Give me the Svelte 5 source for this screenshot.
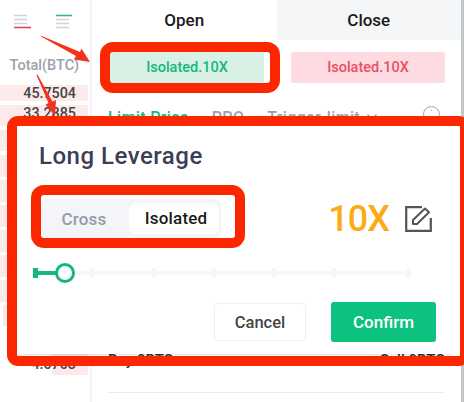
<script>
  const top = [
    { v: '45.7504', h: 16, m: 4 },
    { v: '33.2885', h: 21, m: 4 },
  ];
  const bars = [
    { h: 21, m: 4, l: 0 },
    { h: 22, m: 3, l: 0 },
    { h: 22, m: 3, l: 0 },
    { h: 22, m: 3, l: 0 },
    { h: 22, m: 3, l: 0 },
    { h: 22, m: 3, l: 0 },
    { h: 22, m: 3, l: 0 },
    { h: 21, m: 0, l: 3 },
  ];
  const ticks = [90, 151, 211, 271, 332, 406];
</script>

<div class="page">
  <aside class="book">
    <div class="icons">
      <svg width="18" height="16" viewBox="0 0 18 16">
        <path d="M0 1.5h13M0 5.5h13M0 9.5h13" stroke="#d0d4d9" stroke-width="1.4" fill="none" />
        <path d="M0 13.5h17" stroke="#d9485f" stroke-width="1.6" fill="none" />
      </svg>
      <svg width="18" height="16" viewBox="0 0 18 16">
        <path d="M0 1.5h16" stroke="#2ab98a" stroke-width="1.6" fill="none" />
        <path d="M0 5.5h13M0 9.5h13M0 13.5h13" stroke="#d0d4d9" stroke-width="1.4" fill="none" />
      </svg>
    </div>
    <div class="total">Total(BTC)</div>
    {#each top as r}
      <div class="row" style="height:{r.h}px;margin-bottom:{r.m}px">{r.v}</div>
    {/each}
    {#each bars as b}
      <div class="row" style="height:{b.h}px;margin-bottom:{b.m}px;margin-left:{b.l}px;width:{88 - b.l}px"></div>
    {/each}
    <div class="row last"><span>4.0703</span></div>
  </aside>

  <main class="trade">
    <div class="tabs">
      <div class="tab">Open</div>
      <div class="tab off">Close</div>
    </div>
    <div class="modes">
      <div class="mode long">Isolated.10X</div>
      <div class="mode short">Isolated.10X</div>
    </div>
    <div class="types">
      <span class="active">Limit Price</span>
      <span>PPO</span>
      <span class="trigger">
        Trigger-limit
        <svg width="10" height="6" viewBox="0 0 10 6" fill="none">
          <path d="M0.5 0.5L5 5L9.5 0.5" stroke="#9aa3ad" stroke-width="1.4" />
        </svg>
      </span>
      <i class="info"><b></b></i>
    </div>
    <div class="funds">
      <span>Buy 0BTC</span>
      <span>Sell 0BTC</span>
    </div>
    <div class="rule"></div>
  </main>
  <div class="edge"></div>

  <section class="modal">
    <h2>Long Leverage</h2>
    <div class="line">
      <div class="switch">
        <span class="cross">Cross</span>
        <span class="iso">Isolated</span>
      </div>
      <div class="lev">
        <span class="num">10X</span>
        <svg width="27" height="26" viewBox="0 0 27 26" fill="none">
          <path d="M17 1.2H1.2v23.6h24.6V12" stroke="#555" stroke-width="2.2" />
          <path d="M8 18v-4L20 2.5l4 3.8L12 18z" stroke="#555" stroke-width="2" stroke-linejoin="round" />
        </svg>
      </div>
    </div>
    <div class="slider">
      <div class="track"></div>
      {#each ticks as t}<i class="tick" style="left:{t - 39}px"></i>{/each}
      <div class="start"></div>
      <div class="done"></div>
      <div class="knob"></div>
    </div>
    <div class="actions">
      <button class="cancel">Cancel</button>
      <button class="confirm">Confirm</button>
    </div>
  </section>

  <div class="mark mark-modal"></div>
  <div class="mark mark-mode"></div>
  <div class="mark mark-switch"></div>

  <svg class="arrows" width="464" height="402" viewBox="0 0 464 402">
    <path d="M40.5 35.5 L80 52 L81.5 48.5 L90 62 L74 59.5 L76 56 L41 36.5 z" fill="#f5321e" />
    <path d="M36.5 75 L48.5 103 L45.5 104.5 L55 116 L56 100 L52.5 101.5 L37.5 74.5 z" fill="#f5321e" />
  </svg>
</div>

<style>
  :global(body) {
    margin: 0;
    background: #fff;
  }
  .page {
    position: relative;
    width: 464px;
    height: 402px;
    overflow: hidden;
    display: flex;
    font-family: Roboto, "Liberation Sans", sans-serif;
    font-weight: 500;
    color: #222;
  }
  .book {
    width: 92px;
    box-sizing: border-box;
    border-right: 2px solid #f3f4f6;
    flex: none;
  }
  .icons {
    display: flex;
    gap: 24px;
    padding: 14px 0 0 14px;
    height: 43px;
  }
  .total {
    text-align: right;
    padding-right: 11px;
    font-size: 14.5px;
    color: #9aa3ad;
    line-height: 18px;
    margin-bottom: 10px;
  }
  .row {
    width: 88px;
    box-sizing: border-box;
    text-align: right;
    padding-right: 12px;
    font-size: 14.3px;
    line-height: 16px;
    color: #444;
    background: #fce9ea;
  }
  .row.last {
    height: 21px;
    margin-top: 28px;
    background: linear-gradient(to right, transparent 52px, #fce9ea 52px);
    line-height: 21px;
  }
  .trade {
    width: 369px;
    flex: none;
  }
  .tabs {
    display: flex;
    height: 40px;
  }
  .tab {
    flex: 1;
    text-align: center;
    line-height: 41px;
    font-size: 17px;
    color: #1a1a1a;
  }
  .tab.off {
    background: #f5f6f8;
  }
  .modes {
    display: flex;
    gap: 27px;
    padding: 12px 16px 0 18px;
  }
  .mode {
    flex: 1;
    height: 31px;
    line-height: 31px;
    text-align: center;
    font-size: 14.5px;
    border-radius: 2px;
  }
  .long {
    background: #d9f1e5;
    color: #14b87c;
  }
  .short {
    background: #fddbe0;
    color: #ea4f66;
  }
  .types {
    display: flex;
    gap: 23px;
    height: 20px;
    padding: 25px 21px 0 16px;
    font-size: 16px;
    letter-spacing: 0.35px;
    line-height: 20px;
    color: #9aa3ad;
  }
  .active {
    color: #14b87c;
  }
  .trigger {
    display: flex;
    align-items: flex-start;
    gap: 7px;
  }
  .trigger svg {
    margin-top: 6px;
  }
  .info {
    position: relative;
    width: 15px;
    height: 15px;
    margin: -2px 0 0 auto;
    border: 1px solid #9aa3ad;
    border-radius: 50%;
  }
  .info b {
    position: absolute;
    left: 7px;
    top: 3px;
    width: 1px;
    height: 1px;
    background: #9aa3ad;
  }
  .funds {
    display: flex;
    justify-content: space-between;
    height: 41px;
    margin-top: 223px;
    padding: 0 16px;
    font-size: 15px;
    line-height: 19px;
    color: #333;
  }
  .rule {
    height: 1px;
    margin: 0 16px;
    background: #ececec;
  }
  .edge {
    flex: 1;
    background: #bfc7c9;
  }
  .modal {
    position: absolute;
    left: 16px;
    top: 126px;
    width: 436px;
    height: 228px;
    box-sizing: border-box;
    background: #fff;
    border-radius: 3px;
    box-shadow: 0 1px 2px rgba(0, 0, 0, 0.12);
    padding: 15px 20px 0 23px;
  }
  h2 {
    margin: 0;
    font-size: 24px;
    letter-spacing: 0.5px;
    font-weight: 500;
    color: #3b3e57;
    line-height: 30px;
  }
  .line {
    display: flex;
    justify-content: space-between;
    align-items: center;
    margin-top: 28px;
    margin-left: 2px;
  }
  .switch {
    display: flex;
    align-items: center;
    width: 180px;
    height: 39px;
    background: #f3f5f8;
    border-radius: 6px;
    box-sizing: border-box;
    padding: 4px 2px 4px 0;
    font-size: 17px;
    letter-spacing: 0.2px;
  }
  .cross {
    flex: 1;
    text-align: center;
    color: #959daa;
    padding-right: 2px;
  }
  .iso {
    width: 90px;
    height: 31px;
    box-sizing: border-box;
    padding-left: 4px;
    line-height: 31px;
    background: #fff;
    border-radius: 7px;
    text-align: center;
    color: #1a1a1a;
  }
  .lev {
    display: flex;
    align-items: center;
    gap: 16px;
  }
  .num {
    font-size: 36px;
    letter-spacing: -1px;
    line-height: 36px;
    color: #fbab18;
  }
  .slider {
    position: relative;
    height: 22px;
    margin-top: 24px;
  }
  .track {
    position: absolute;
    left: 20px;
    top: 9px;
    width: 351px;
    height: 4px;
    background: #f6f7f9;
  }
  .tick {
    position: absolute;
    top: 6px;
    width: 5px;
    height: 10px;
    background: #f6f7f9;
  }
  .start {
    position: absolute;
    left: -6px;
    top: 6px;
    width: 5px;
    height: 10px;
    background: #14b87c;
  }
  .done {
    position: absolute;
    left: -2px;
    top: 9px;
    width: 20px;
    height: 4px;
    background: #14b87c;
  }
  .knob {
    position: absolute;
    left: 16px;
    top: 1px;
    width: 20px;
    height: 20px;
    box-sizing: border-box;
    border: 3px solid #14b87c;
    border-radius: 50%;
    background: #fff;
  }
  .actions {
    display: flex;
    justify-content: flex-end;
    align-items: center;
    gap: 25px;
    margin-top: 18px;
    margin-right: -4px;
  }
  button {
    border-radius: 3px;
    font: inherit;
    padding: 0;
  }
  .cancel {
    width: 92px;
    height: 38px;
    background: #fff;
    border: 1px solid #eef0f2;
    color: #444;
    font-size: 16.5px;
  }
  .confirm {
    width: 105px;
    height: 40px;
    background: #0cc27e;
    border: 0;
    color: #fff;
    font-size: 17px;
  }
  .mark {
    position: absolute;
    box-sizing: border-box;
    border-style: solid;
    border-color: #fb2700;
  }
  .mark-modal {
    left: 7px;
    top: 116px;
    width: 463px;
    height: 250px;
    border-width: 10px;
    border-radius: 11px;
  }
  .mark-mode {
    left: 100px;
    top: 42px;
    width: 180px;
    height: 51px;
    border-width: 10px;
    border-radius: 13px;
  }
  .mark-switch {
    left: 31px;
    top: 185px;
    width: 214px;
    height: 63px;
    border-width: 10px;
    border-radius: 13px;
  }
  .arrows {
    position: absolute;
    left: 0;
    top: 0;
    pointer-events: none;
  }
</style>
